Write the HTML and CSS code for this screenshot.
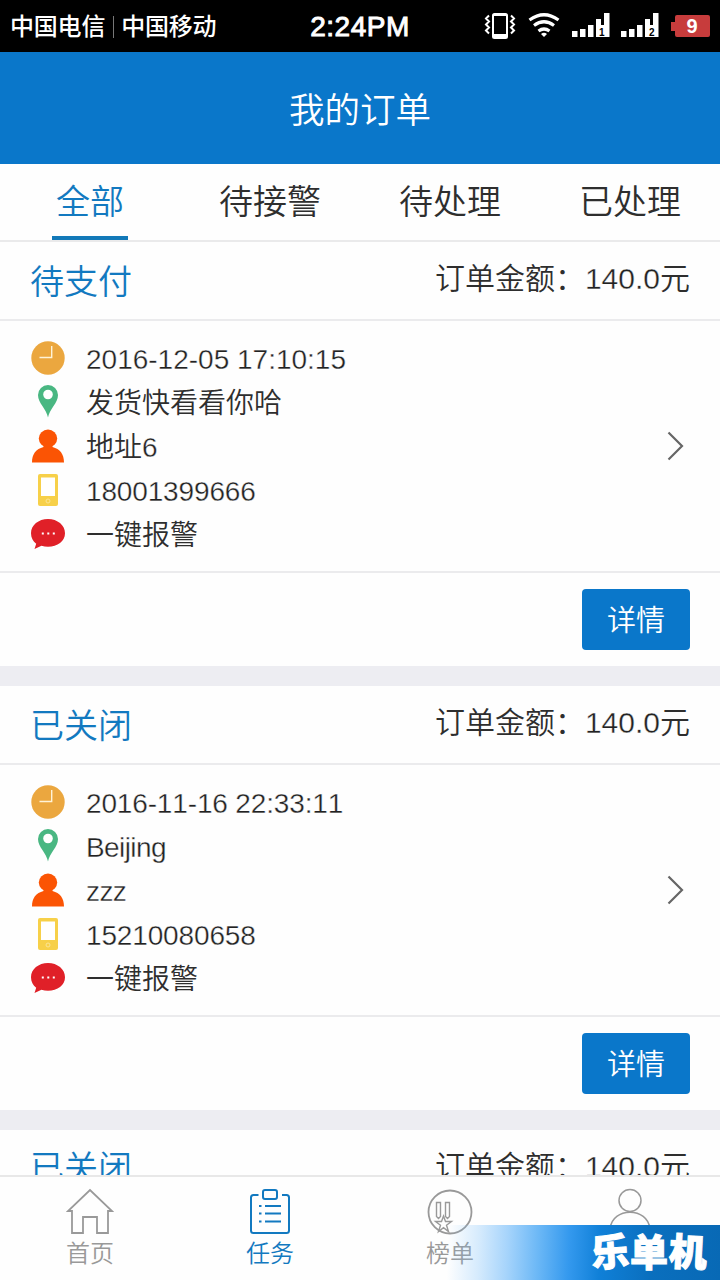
FILE: index.html
```html
<!DOCTYPE html>
<html lang="zh-CN">
<head>
<meta charset="utf-8">
<title>我的订单</title>
<link rel="stylesheet" href="styles.css">
</head>
<body>
<svg class="defs" width="0" height="0">
  <symbol id="i-clock" viewBox="0 0 36 36"><circle cx="18" cy="18" r="16.7" fill="#eba73f"/><path d="M9.500 17.500H21.700V6" fill="none" stroke="#fff3d8" stroke-width="1.4"/></symbol>
  <symbol id="i-pin" viewBox="0 0 36 36"><path d="M18 33.500C16.500 25 8 19 8 11a10 10 0 0 1 20 0C28 19 19.500 25 18 33.500Z" fill="#49b782"/><circle cx="18" cy="10.500" r="4.800" fill="#fff"/></symbol>
  <symbol id="i-user" viewBox="0 0 36 36"><ellipse cx="18" cy="10.500" rx="9.200" ry="9" fill="#fb5404"/><path d="M13.500 16h9v3C30 21 34 26 34 34.500H2C2 26 6 21 13.500 19Z" fill="#fb5404"/></symbol>
  <symbol id="i-phone" viewBox="0 0 36 36"><rect x="8" y="2" width="20" height="32" rx="2" fill="#f7d049"/><rect x="11" y="5.500" width="14" height="18.500" fill="#fff"/><circle cx="18" cy="29" r="2" fill="none" stroke="#fbe596"/></symbol>
  <symbol id="i-chat" viewBox="0 0 36 36"><path d="M18 3C8.500 3 1 9.200 1 17.200c0 4.500 2 8 5.200 10.600L4.500 33l7-3.200c2 .6 4.200.9 6.500.9 9.500 0 17-5.500 17-13.500S27.500 3 18 3Z" fill="#e02028"/><path d="M11.800 17.500h2M17.300 17.500h2M22.800 17.500h2" stroke="#fff" stroke-width="2"/></symbol>
  <symbol id="i-arrow" viewBox="0 0 20 30"><path d="M2.500 1.500 16 15 2.500 28.500" fill="none" stroke="#666" stroke-width="2.200"/></symbol>
</svg>
<div class="screen">
  <div class="status">
    <span class="carriers">中国电信<i class="sep"></i>中国移动</span>
    <span class="time">2:24PM</span>
    <svg class="sys" width="236" height="36" viewBox="0 0 236 36">
      <g fill="none" stroke="#fff" transform="translate(0 .5)">
        <rect x="9" y="7.500" width="14" height="24" rx="1.500" stroke-width="2"/>
        <path d="M9 8.500h14" stroke-width="2"/>
        <path d="M9 29h14" stroke-width="3"/>
        <path d="M5 9l-3 3 3 3-3 3 3 3-3 3 3 3M27 9l3 3-3 3 3 3-3 3 3 3-3 3" stroke-width="2"/>
        <path d="M45.500 13.500Q60 3 74.500 13.500M50 19Q60 11.500 70 19M54.500 24.500Q60 20.500 65.500 24.500" stroke-width="3.200"/>
      </g>
      <path d="M57 28Q60 25.500 63 28L60 31Z" fill="#fff"/>
      <path d="M88 25h5.500v6H88zM96 23h5.500v8H96zM104 19h5.500v12H104zM112 13h5v6h3V7h5.500v24H112zM137 25h5.500v6H137zM145 23h5.500v8H145zM153 19h5.500v12H153zM161 13h5v6h3V7h5.500v24H161z" fill="#fff"/>
      <g class="sim"><text x="115" y="29.500">1</text><text x="165" y="29.500">2</text></g>
      <path d="M193 9h31q2 0 2 2v18q0 2-2 2h-31q-2 0-2-2v-4h-4v-9h4v-5q0-2 2-2Z" fill="#c73c3c"/>
      <text class="battery" x="208" y="27">9</text>
    </svg>
  </div>
  <header class="title">我的订单</header>
  <nav class="tabs">
    <a class="tab active"><span>全部</span></a><a class="tab"><span>待接警</span></a><a class="tab"><span>待处理</span></a><a class="tab"><span>已处理</span></a>
  </nav>
  <main class="orders">
    <section class="card">
      <div class="head"><span class="state">待支付</span><span class="amount">订单金额：<b>140.0</b>元</span></div>
      <div class="body">
        <ul class="info">
          <li><svg><use href="#i-clock"/></svg><span><b>2016-12-05 17:10:15</b></span></li>
          <li><svg><use href="#i-pin"/></svg><span>发货快看看你哈</span></li>
          <li><svg><use href="#i-user"/></svg><span>地址<b>6</b></span></li>
          <li><svg><use href="#i-phone"/></svg><span class="num"><b>18001399666</b></span></li>
          <li><svg><use href="#i-chat"/></svg><span>一键报警</span></li>
        </ul>
        <svg class="arrow"><use href="#i-arrow"/></svg>
      </div>
      <div class="foot"><a class="btn">详情</a></div>
    </section>
    <section class="card">
      <div class="head"><span class="state">已关闭</span><span class="amount">订单金额：<b>140.0</b>元</span></div>
      <div class="body">
        <ul class="info">
          <li><svg><use href="#i-clock"/></svg><span class="num"><b>2016-11-16 22:33:11</b></span></li>
          <li><svg><use href="#i-pin"/></svg><span class="latin"><b>Beijing</b></span></li>
          <li><svg><use href="#i-user"/></svg><span class="latin"><b>zzz</b></span></li>
          <li><svg><use href="#i-phone"/></svg><span class="num"><b>15210080658</b></span></li>
          <li><svg><use href="#i-chat"/></svg><span>一键报警</span></li>
        </ul>
        <svg class="arrow"><use href="#i-arrow"/></svg>
      </div>
      <div class="foot"><a class="btn">详情</a></div>
    </section>
    <section class="card">
      <div class="head"><span class="state">已关闭</span><span class="amount">订单金额：<b>140.0</b>元</span></div>
    </section>
  </main>
  <nav class="bottom">
    <a class="item"><svg viewBox="0 0 48 48"><path d="M6 23H2L24 2l22 21h-4v22H31V29H17v16H6Z"/></svg>首页</a>
    <a class="item on"><svg viewBox="0 0 48 48"><path d="M12.500 7H7.500Q5 7 5 9.500v33Q5 45 7.500 45h33q2.500 0 2.500-2.500v-33Q43 7 40.500 7h-4.500"/><rect x="17" y="2" width="14" height="9" rx="2"/><path d="M13 18h2.500M19 18h16M13 25.500h2.500M19 25.500h16M13 33.500h2.500M19 33.500h16"/></svg>任务</a>
    <a class="item"><svg viewBox="0 0 48 48"><circle cx="24" cy="24" r="21.500"/><path class="thin" d="M10.500 14.500h4v14l-2 2-2-2ZM19.500 14.500h4v14l-2 2-2-2ZM17.500 28l2 5.500h6l-5 3.800 2 6.200-5-3.800-5 3.800 2-6.200-5-3.800h6Z"/></svg>榜单</a>
    <a class="item"><svg viewBox="0 0 48 48"><circle class="fine" cx="24" cy="12.500" r="11"/><path class="fine" d="M4 41C6 18.500 42 18.500 44 41Z"/></svg></a>
    <div class="mark"><span>乐</span><span>单</span><span>机</span></div>
  </nav>
</div>
</body>
</html>
```
FILE: styles.css
```css
* { box-sizing: border-box; }
body { margin: 0; background: #fff; }
.defs { position: absolute; }
.screen {
  width: 720px; height: 1280px; overflow: hidden;
  display: flex; flex-direction: column;
  background: #fefefe; color: #2e2e2e;
  font-family: "Liberation Sans", "Noto Sans CJK SC", sans-serif;
  font-weight: 350; font-kerning: none;
}
b { font-weight: 400; color: #222; -webkit-text-stroke: .35px #fefefe; }
.status {
  flex: none; height: 52px; background: #000; color: #fff;
  display: grid; grid-template-columns: 1fr 120px 1fr; align-items: center;
  font-weight: 500;
}
.carriers { display: flex; align-items: center; padding-left: 10px; padding-top: 1px; font-size: 24px; line-height: 36px; letter-spacing: -.2px; }
.sep { width: 1px; height: 22px; margin: 0 7px 0 8px; background: #777; }
.time { text-align: center; font-size: 28px; line-height: 36px; letter-spacing: .5px; -webkit-text-stroke: .9px #fff; padding-top: 1px; }
.sys { justify-self: end; margin-top: -4px; }
.sim { font: bold 10px "Liberation Sans", sans-serif; fill: #000; }
.battery { font: bold 20px "Liberation Sans", sans-serif; fill: #fff; text-anchor: middle; }
.title {
  flex: none; height: 112px; background: #0a77ca; color: #fff; padding-bottom: 2px;
  display: flex; align-items: center; justify-content: center; font-size: 35.5px;
}
.tabs { flex: none; height: 78px; display: flex; border-bottom: 2px solid #eaeaeb; }
.tab { flex: 1; display: flex; justify-content: center; font-size: 34px; line-height: 77px; }
.tab span { height: 76px; padding: 0 4px; }
.active { color: #1279c0; }
.active span { border-bottom: 4px solid #1279b8; }
.orders { flex: 1; min-height: 0; overflow: hidden; }
.card { height: 444px; border-bottom: 20px solid #ededf2; }
.head {
  height: 79px; border-bottom: 2px solid #ebebed; padding: 0 30px;
  display: flex; justify-content: space-between;
}
.state { color: #1279c0; font-size: 34px; line-height: 80px; }
.amount { font-size: 30px; line-height: 74px; }
.card:last-child .head { height: 77px; }
.card:last-child .state { line-height: 76px; }
.body {
  height: 252px; border-bottom: 2px solid #ebebed; padding: 15px 34px 15px 30px;
  display: flex; justify-content: space-between; align-items: center;
}
.info { list-style: none; margin: 0; padding: 0; }
.info li { height: 44px; display: flex; align-items: center; gap: 20px; font-size: 28px; line-height: 44px; }
.info svg { width: 36px; height: 36px; flex: none; }
.info span { padding-top: 4px; }
.num { letter-spacing: -.15px; }
.latin { letter-spacing: -.6px; }
.arrow { width: 20px; height: 30px; }
.foot { height: 93px; padding: 0 30px; display: flex; align-items: center; justify-content: flex-end; }
.btn {
  width: 108px; height: 61px; border-radius: 4px; background: #0a77ca; color: #fff;
  font-size: 29px; line-height: 65px; text-align: center;
}
.bottom {
  flex: none; position: relative; height: 105px; background: #fefefe;
  border-top: 2px solid #e8e8e8; display: flex;
}
.item {
  flex: 1; display: flex; flex-direction: column; align-items: center;
  padding-top: 11px; font-size: 24px; line-height: 35px; color: #999;
}
.item svg { width: 48px; height: 48px; fill: none; stroke: currentColor; stroke-width: 1.8; }
.item .thin { stroke-width: 1.4; }
.item .fine { stroke-width: 1.5; }
.on { color: #1279c0; }
.on svg { stroke-width: 2; }
.mark {
  position: absolute; right: 0; bottom: 0; width: 280px; height: 55px; padding-right: 13px;
  background: linear-gradient(92deg, rgba(120,190,250,0) 3%, rgba(120,190,250,.3) 14%, rgba(120,190,250,.65) 24%, #6cb8f6 35%, #3499ee 46%, #1080d8 57%, #0a6fbe 75%, #0869b5 100%);
  color: #fff; font-size: 38px; font-weight: 900; line-height: 56px;
  display: flex; justify-content: flex-end; gap: 1px;
  -webkit-text-stroke: 1px #fff;
}
.mark span:first-child { transform: rotate(-4deg); }
.mark span:last-child { transform: rotate(3deg); }
```
